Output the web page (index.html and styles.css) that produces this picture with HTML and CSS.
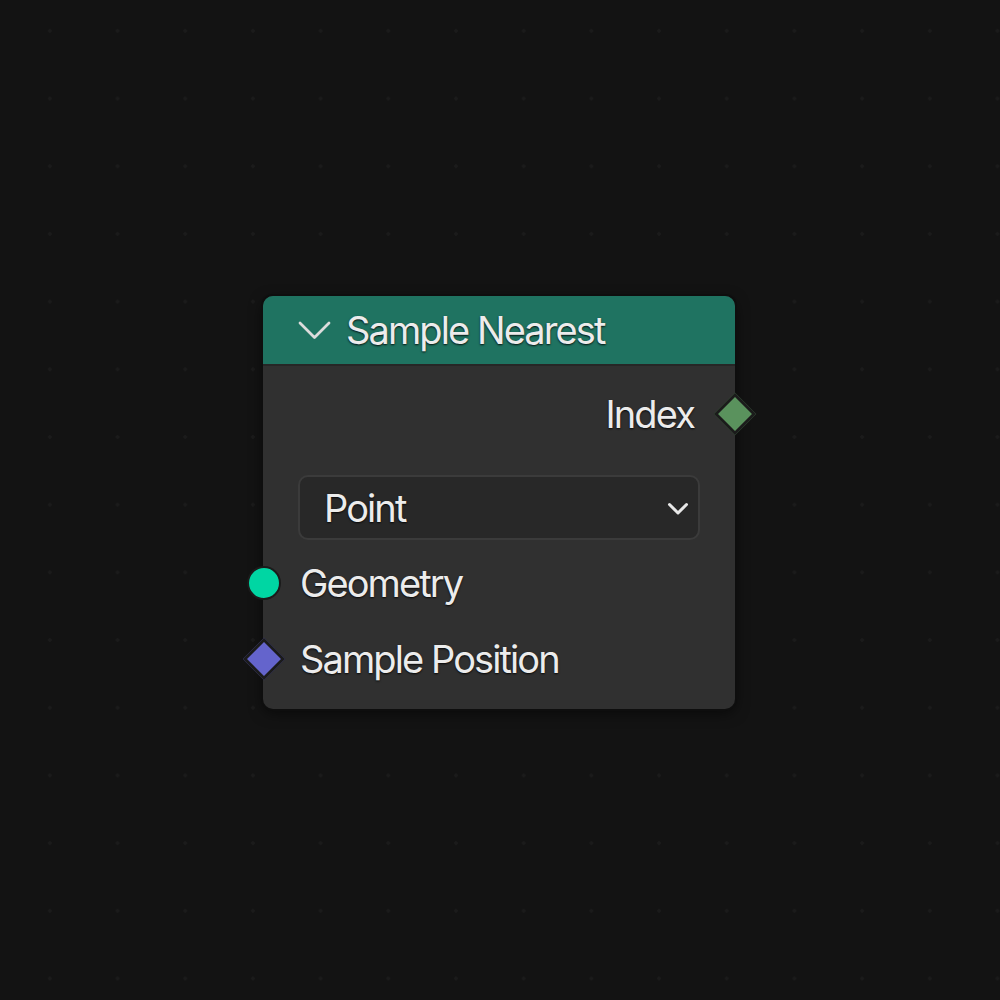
FILE: index.html
```html
<!DOCTYPE html>
<html>
<head>
<meta charset="utf-8">
<link rel="stylesheet" href="styles.css">
</head>
<body>
<div class="canvas">
  <div class="node">
    <div class="node-header">
      <svg class="collapse" width="33" height="19" viewBox="0 0 33 19"><path d="M2 2 L16.5 16.5 L31 2" fill="none" stroke="#dcdcdc" stroke-width="2.8" stroke-linecap="round" stroke-linejoin="round"/></svg>
      <span class="title">Sample Nearest</span>
    </div>
    <div class="node-body">
      <div class="row row-out">
        <span class="label">Index</span>
        <span class="socket diamond green out"></span>
      </div>
      <div class="dropdown">
        <span class="label">Point</span>
        <svg class="chev" width="22" height="14" viewBox="0 0 22 14"><path d="M2.5 2.5 L11 11 L19.5 2.5" fill="none" stroke="#e8e8e8" stroke-width="3" stroke-linecap="round" stroke-linejoin="round"/></svg>
      </div>
      <div class="row row-in">
        <span class="socket circle teal in"></span>
        <span class="label">Geometry</span>
      </div>
      <div class="row row-in">
        <span class="socket diamond purple in"></span>
        <span class="label">Sample Position</span>
      </div>
    </div>
  </div>
</div>
</body>
</html>
```
FILE: styles.css
```css
html, body {
  margin: 0;
  padding: 0;
}
body {
  background-color: #131313;
  background-image: radial-gradient(circle, #1b1b1b 1.5px, transparent 2.1px);
  background-size: 67.7px 67.7px;
  background-position: 16px -3px;
  font-family: "Inter", "Liberation Sans", sans-serif;
}
.canvas {
  width: 1000px;
  height: 1000px;
  display: flex;
  align-items: flex-start;
  justify-content: flex-start;
  padding: 296px 0 0 263px;
  box-sizing: border-box;
}
.node {
  width: 472px;
  background: #303030;
  border-radius: 10px;
  box-shadow: 0 0 0 2px #0e0e0e, 0 4px 14px rgba(0,0,0,0.55);
  position: relative;
}
.node-header {
  height: 70px;
  background: #1f7361;
  border-radius: 10px 10px 0 0;
  display: flex;
  align-items: center;
  padding-left: 35px;
  padding-top: 0;
  gap: 15px;
  border-bottom: 2px solid #262626;
  box-sizing: border-box;
}
.collapse {
  margin-top: 1px;
}
.title, .label {
  color: #ececec;
  font-size: 38px;
  letter-spacing: -1.9px;
  text-shadow: 0 1px 2px rgba(0,0,0,0.85);
  line-height: 1;
}
.node-body {
  padding: 10px 0 12px 0;
}
.row {
  height: 76px;
  display: flex;
  align-items: center;
  position: relative;
}
.row-out {
  justify-content: flex-end;
  padding-right: 41px;
}
.row-in {
  padding-left: 37px;
}
.dropdown {
  margin: 23px 35px 5px 35px;
  height: 65px;
  box-sizing: border-box;
  background: #282828;
  border: 2px solid #3b3b3b;
  border-radius: 10px;
  display: flex;
  align-items: center;
  justify-content: space-between;
  padding: 0 9px 0 24px;
}
.chev {
  margin-top: 2px;
}
.socket {
  position: absolute;
  top: 50%;
  box-sizing: border-box;
}
.diamond {
  width: 30px;
  height: 30px;
  border: 3px solid #1b1b1b;
  transform: translate(-50%, -50%) rotate(45deg);
}
.circle {
  width: 34px;
  height: 34px;
  border-radius: 50%;
  border: 2.5px solid #1b1b1b;
  transform: translate(-50%, -50%);
}
.out { left: 100%; }
.in { left: 0.5px; }
.green { background: #5a925d; }
.teal { background: #00d6a3; }
.purple { background: #6464cc; }
```
